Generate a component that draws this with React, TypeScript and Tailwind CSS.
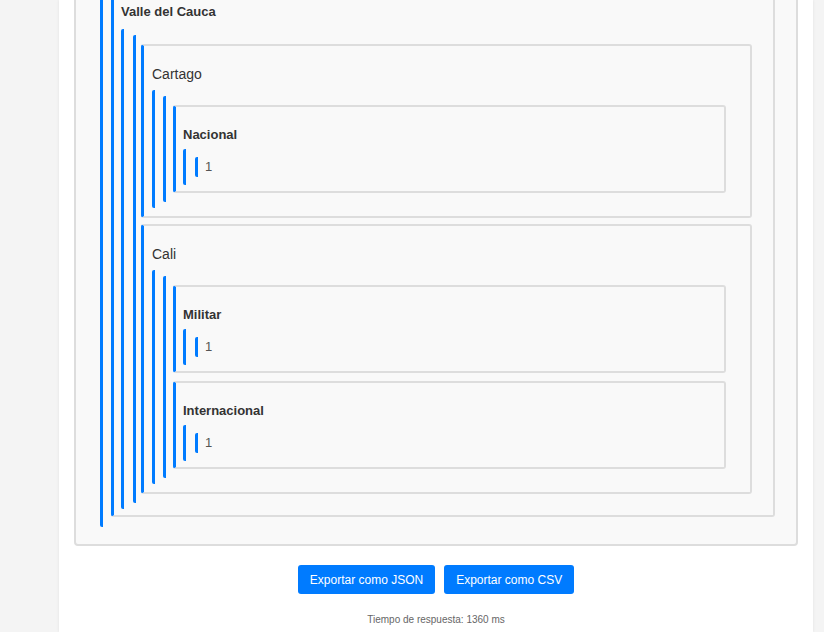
import React from "react";

type BoxProps = {
  label: string;
  bold?: boolean;
  pl: string;
  pr: string;
  pb: string;
  mt: string;
  children: React.ReactNode;
};

function Box({ label, bold, pl, pr, pb, mt, children }: BoxProps) {
  return (
    <div
      className={`border-2 border-[#ddd] border-l-[3px] border-l-[#007bff] rounded-[3px] bg-[#f9f9f9] pt-[20px] ${pl} ${pr} ${pb}`}
    >
      <div
        className={
          bold
            ? "text-[13px] font-bold leading-[16px] text-[#333]"
            : "text-[14px] leading-[16px] text-[#333]"
        }
      >
        {label}
      </div>
      <div className={mt}>{children}</div>
    </div>
  );
}

function Group({
  gap,
  apl,
  bpl,
  children,
}: {
  gap: string;
  apl: string;
  bpl: string;
  children: React.ReactNode;
}) {
  return (
    <div className={`border-l-[3px] border-[#007bff] rounded-[2px] py-[6px] ${apl}`}>
      <div className={`border-l-[3px] border-[#007bff] rounded-[2px] py-[9px] ${bpl}`}>
        <div className={`flex flex-col ${gap}`}>{children}</div>
      </div>
    </div>
  );
}

function Leaf({ value }: { value: string }) {
  return (
    <div className="border-l-[3px] border-[#007bff] rounded-[2px] pl-[9px] py-[8px]">
      <div className="border-l-[3px] border-[#007bff] rounded-[2px] pl-[7px] h-[20px] leading-[20px] text-[13px] text-[#555]">
        {value}
      </div>
    </div>
  );
}

function LeafBox({ label }: { label: string }) {
  return (
    <Box label={label} bold pl="pl-[7px]" pr="pr-[20px]" pb="pb-[6px]" mt="mt-[6px]">
      <Leaf value="1" />
    </Box>
  );
}

export default function App() {
  return (
    <div
      className="h-[632px] w-[824px] overflow-hidden bg-[#f4f4f4]"
      style={{ fontFamily: '"Liberation Sans", Arial, sans-serif' }}
    >
      <div className="ml-[59px] flex h-full w-[754px] flex-col bg-white px-[15px] shadow-[0_0_3px_rgba(0,0,0,0.08)]">
        <div className="-mt-[40px] border-2 border-[#ddd] rounded-[4px] bg-[#f9f9f9] pl-[24px] pr-[21px] pt-[10px] pb-[17px]">
          <div className="border-l-[3px] border-[#007bff] rounded-[2px] pl-[8px] pt-[10px] pb-[10px]">
            <Box label="Valle del Cauca" bold pl="pl-[7px]" pr="pr-[21px]" pb="pb-[6px]" mt="mt-[9px]">
              <Group gap="gap-[6px]" apl="pl-[9px]" bpl="pl-[5px]">
                <Box label="Cartago" pl="pl-[8px]" pr="pr-[24px]" pb="pb-[8px]" mt="mt-[8px]">
                  <Group gap="gap-[8px]" apl="pl-[8px]" bpl="pl-[7px]">
                    <LeafBox label="Nacional" />
                  </Group>
                </Box>
                <Box label="Cali" pl="pl-[8px]" pr="pr-[24px]" pb="pb-[8px]" mt="mt-[8px]">
                  <Group gap="gap-[8px]" apl="pl-[8px]" bpl="pl-[7px]">
                    <LeafBox label="Militar" />
                    <LeafBox label="Internacional" />
                  </Group>
                </Box>
              </Group>
            </Box>
          </div>
        </div>
        <div className="mt-[19px] flex justify-center gap-[9px]">
          <button className="h-[29px] rounded-[3px] bg-[#007bff] px-[12px] text-[12px] text-white">
            Exportar como JSON
          </button>
          <button className="h-[29px] rounded-[3px] bg-[#007bff] px-[12px] text-[12px] text-white">
            Exportar como CSV
          </button>
        </div>
        <div className="mt-[20px] text-center text-[10px] leading-[12px] text-[#666]">
          Tiempo de respuesta: 1360 ms
        </div>
      </div>
    </div>
  );
}
